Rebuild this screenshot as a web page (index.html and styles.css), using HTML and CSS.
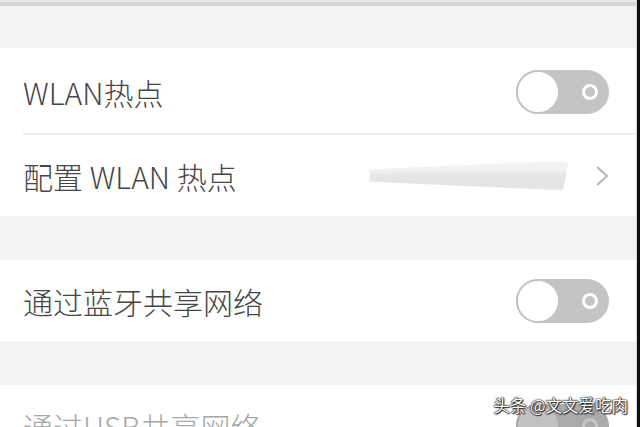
FILE: index.html
```html
<!DOCTYPE html>
<html lang="zh-CN">
<head>
    <meta charset="UTF-8">
    <meta name="viewport" content="width=device-width, initial-scale=1.0">
    <title>个人热点</title>
    <link rel="stylesheet" href="styles.css">
</head>
<body>
    <div class="frame">
        <div class="screen">
            <div class="top-edge"></div>
            <div class="spacer first"></div>

            <div class="group">
                <div class="row tall divided">
                    <span class="label">WLAN热点</span>
                    <span class="switch"><span class="knob"></span><span class="dot"></span></span>
                </div>
                <div class="row">
                    <span class="label">配置 WLAN 热点</span>
                    <span class="value">
                        <span class="blurred"></span>
                        <svg class="chevron" width="14" height="22" viewBox="0 0 14 22">
                            <path d="M2 2 L12 11 L2 20" fill="none" stroke="#b9b9b9" stroke-width="2.2"/>
                        </svg>
                    </span>
                </div>
            </div>

            <div class="spacer"></div>

            <div class="group">
                <div class="row">
                    <span class="label">通过蓝牙共享网络</span>
                    <span class="switch"><span class="knob"></span><span class="dot"></span></span>
                </div>
            </div>

            <div class="spacer"></div>

            <div class="group">
                <div class="row">
                    <span class="label muted">通过USB共享网络</span>
                    <span class="switch disabled"><span class="knob"></span><span class="dot"></span></span>
                </div>
            </div>

            <div class="watermark">头条 @文文爱吃肉</div>
        </div>
        <div class="edge"></div>
    </div>
</body>
</html>
```

FILE: styles.css
```css
* {
    margin: 0;
    padding: 0;
    box-sizing: border-box;
}

html, body {
    width: 640px;
    height: 427px;
    overflow: hidden;
}

body {
    background: #0e0e0e;
    font-family: "Noto Sans CJK SC", "Noto Sans", sans-serif;
}

.frame {
    display: flex;
    width: 640px;
    height: 427px;
}

/* dark frame at the right side of the photo */
.edge {
    width: 4px;
    flex-shrink: 0;
    background: #0e0e0e;
    border-left: 1px solid #dcdcdc;
}

.screen {
    position: relative;
    flex: 1;
    height: 427px;
    overflow: hidden;
    background: #f3f3f3;
    display: flex;
    flex-direction: column;
}

.screen > * {
    flex-shrink: 0;
}

.top-edge {
    height: 6px;
    background: linear-gradient(#e9e9e9 0, #e9e9e9 2px, #d6d6d6 2px, #d6d6d6 6px);
}

.spacer {
    height: 44px;
}

.spacer.first {
    height: 42px;
}

.group {
    background: #fff;
}

.row {
    height: 81px;
    padding: 0 27px 0 23px;
    display: flex;
    align-items: center;
    justify-content: space-between;
}

.row.tall {
    height: 87px;
}

.divided {
    position: relative;
}

.divided::after {
    content: "";
    position: absolute;
    left: 23px;
    right: 0;
    bottom: 0;
    height: 2px;
    background: #ededed;
}

.label {
    font-size: 30px;
    font-weight: 300;
    color: #464646;
}

.label.muted {
    color: #a8a8a8;
}

.switch {
    position: relative;
    width: 93px;
    height: 44px;
    border-radius: 22px;
    background: #c4c4c4;
}

.knob {
    position: absolute;
    left: 0;
    top: 0;
    width: 44px;
    height: 44px;
    border-radius: 50%;
    background: #fff;
    border: 2px solid #c4c4c4;
}

.dot {
    position: absolute;
    left: 66px;
    top: 14px;
    width: 16px;
    height: 16px;
    border-radius: 50%;
    border: 3px solid #fff;
}

.switch.disabled {
    background: #aaaaaa;
}

.switch.disabled .knob {
    background: #c2c2c2;
    border-color: #aaaaaa;
}

.switch.disabled .dot {
    border-color: #c6c6c6;
}

.value {
    display: flex;
    align-items: center;
    gap: 26px;
}

.blurred {
    width: 200px;
    height: 30px;
    background: linear-gradient(#f2f2f2 0, #f2f2f2 40%, #e4e4e4 40%, #e4e4e4 100%);
    clip-path: polygon(0 30%, 96% 0, 100% 0, 97% 100%, 0 70%);
    filter: blur(2px);
}

.chevron {
    display: block;
}

.watermark {
    position: absolute;
    right: 8px;
    bottom: 10px;
    font-size: 16.5px;
    color: #fff;
    text-shadow: 0 0 1px #111, 0 0 1px #111, 0 0 2px #333, 1px 1px 1px #333;
}
```
